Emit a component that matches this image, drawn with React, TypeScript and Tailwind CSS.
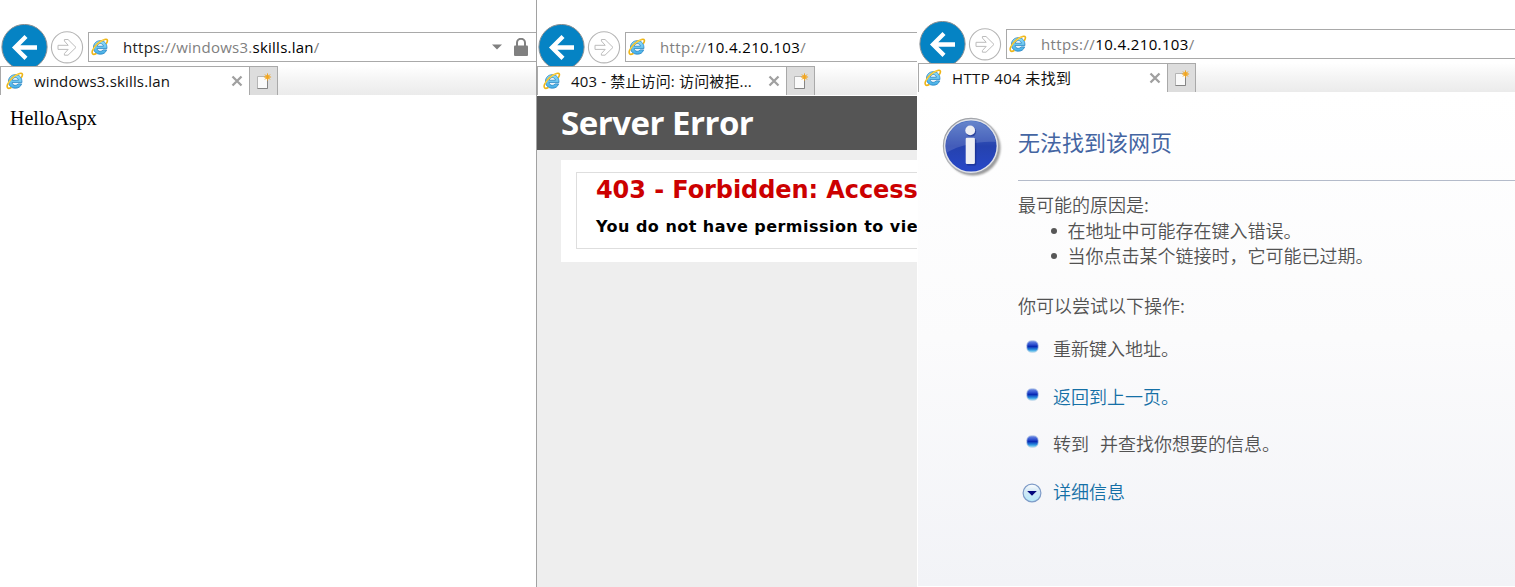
import type { ReactNode } from 'react';

const UI_FONT = "font-['Open_Sans','Noto_Sans_CJK_SC',sans-serif]";
const CJK_FONT = "font-['Noto_Sans_CJK_SC',sans-serif]";

function IeIcon() {
  return (
    <svg width="18" height="18" viewBox="0 0 18 18" className="shrink-0">
      <defs>
        <linearGradient id="ieBlue" x1="0" y1="0" x2="0" y2="1">
          <stop offset="0" stopColor="#8fdcf8" />
          <stop offset="1" stopColor="#45aee6" />
        </linearGradient>
      </defs>
      <path
        d="M15.9 10.6H6.1C6.3 12.4 7.5 13.3 9.3 13.3C10.6 13.3 11.6 12.8 12.1 11.9H15.6C14.7 14.7 12.4 16.2 9.3 16.2C5.2 16.2 2.5 13.5 2.5 9.5C2.5 5.5 5.2 2.7 9.3 2.7C13.6 2.7 16.2 5.7 15.9 10.6ZM6.2 8.2H12.4C12.2 6.6 11 5.6 9.3 5.6C7.6 5.6 6.5 6.6 6.2 8.2Z"
        fill="url(#ieBlue)"
        stroke="#2180c0"
        strokeWidth=".8"
      />
      <path
        d="M15.6 5.2C17.1 2.6 16.7 .7 13.7 1.5C9 2.7 3.5 7.7 1.6 12.2C.4 15.3 1.6 17.3 4.9 15.8"
        fill="none"
        stroke="#eeb516"
        strokeWidth="1.6"
        strokeLinecap="round"
      />
      <path d="M13.4 1.7C8.9 3.1 4 7.6 2 11.8" fill="none" stroke="#ffe164" strokeWidth=".8" />
    </svg>
  );
}

function BackButton() {
  return (
    <svg width="47" height="42" viewBox="0 0 47 42" className="block shrink-0">
      <circle cx="23.5" cy="23" r="22.6" fill="#0583c4" stroke="#8b8f92" strokeWidth="1" />
      <path d="M25 12.5L14 23.5L25 34.4M14.5 23.5H36" fill="none" stroke="#fff" strokeWidth="4.3" />
    </svg>
  );
}

function ForwardButton() {
  return (
    <svg width="34" height="34" viewBox="0 0 34 34" className="mb-[2px] block shrink-0">
      <circle cx="17" cy="17.3" r="15.6" fill="#fff" stroke="#b4b4b4" strokeWidth="1.1" />
      <path
        d="M8 15.3H18.2L14.4 11V9.5H18L26 17.4L18 25.2H14.4V23.6L18.2 19.4H8Z"
        fill="none"
        stroke="#bcbcbc"
        strokeWidth="1"
      />
    </svg>
  );
}

function NewTabIcon() {
  return (
    <svg width="16" height="18" viewBox="0 0 16 18">
      <path d="M1.5 4.5H11.5V16.5H1.5Z" fill="#fafafa" stroke="#b5b5b5" />
      <path d="M1.5 16.5H11.5V7" fill="none" stroke="#858585" />
      <circle cx="11.5" cy="5" r="2.3" fill="#ffc24a" />
      <path
        d="M11.5 1.4V8.6M7.9 5H15.1M9 2.5L14 7.5M14 2.5L9 7.5"
        stroke="#eda325"
        strokeWidth="1"
      />
    </svg>
  );
}

function CloseIcon() {
  return (
    <svg width="12" height="12" viewBox="0 0 12 12" className="shrink-0">
      <path d="M1.5 1.5L10.5 10.5M10.5 1.5L1.5 10.5" stroke="#a0a0a0" strokeWidth="2.3" />
    </svg>
  );
}

function LockIcon() {
  return (
    <svg width="14" height="18" viewBox="0 0 14 18">
      <path d="M3 8.5V4.8a4 4 0 0 1 8 0V8.5" fill="none" stroke="#808080" strokeWidth="2" />
      <rect x="0" y="7.4" width="14" height="10.6" rx="1" fill="#808080" />
    </svg>
  );
}

type ChromeProps = {
  url: ReactNode;
  title: string;
  titleClass: string;
  topClass: string;
  extras?: ReactNode;
};

function BrowserChrome({ url, title, titleClass, topClass, extras }: ChromeProps) {
  return (
    <header className={`shrink-0 ${UI_FONT}`}>
      <div className={`flex items-end ${topClass}`}>
        <div className="w-px shrink-0" />
        <BackButton />
        <div className="w-[2px] shrink-0" />
        <ForwardButton />
        <div className="mb-1 ml-1 flex h-[30px] min-w-0 flex-1 items-center border-y border-l border-[#a9a9a9] pl-[2px]">
          <IeIcon />
          <span className="ml-[14px] text-[15px] leading-[28px] whitespace-nowrap text-[#808080]">{url}</span>
          {extras}
        </div>
      </div>
      <div className="flex h-[29px] bg-linear-to-b from-white via-[#f4f4f4] to-[#ebebeb]">
        <div className="flex w-[249px] shrink-0 items-center border-t border-l border-[#a9a9a9] bg-white pl-[5px]">
          <IeIcon />
          <span className={`ml-[10px] flex-1 text-[15px] leading-[28px] whitespace-nowrap text-[#111] ${titleClass}`}>
            {title}
          </span>
          <div className="mr-[6px] flex">
            <CloseIcon />
          </div>
        </div>
        <div className="flex w-[29px] shrink-0 items-center justify-center border-x border-t border-[#a9a9a9] bg-[#dddddd]">
          <NewTabIcon />
        </div>
      </div>
    </header>
  );
}

function InfoIcon() {
  return (
    <svg width="62" height="62" viewBox="0 0 62 62" className="block shrink-0">
      <defs>
        <linearGradient id="infoFill" x1="0" y1="0" x2="0" y2="1">
          <stop offset="0" stopColor="#4d72c4" />
          <stop offset=".5" stopColor="#2542ae" />
          <stop offset="1" stopColor="#2747c8" />
        </linearGradient>
        <linearGradient id="infoRim" x1="0" y1="0" x2="1" y2="1">
          <stop offset="0" stopColor="#8f9298" />
          <stop offset=".5" stopColor="#b6b8bd" />
          <stop offset="1" stopColor="#909298" />
        </linearGradient>
        <filter id="infoShadow" x="-20%" y="-20%" width="150%" height="150%">
          <feGaussianBlur stdDeviation="1.3" />
        </filter>
      </defs>
      <circle cx="31" cy="31" r="27.5" fill="#000" opacity=".4" filter="url(#infoShadow)" />
      <circle cx="29" cy="29" r="27.6" fill="#e2e4e9" stroke="url(#infoRim)" strokeWidth="1.2" />
      <circle cx="29" cy="29" r="25.6" fill="url(#infoFill)" />
      <path d="M3.6 30A25.4 25.4 0 0 1 54 25C38 24 20 27 3.8 36Z" fill="#fff" opacity=".14" />
      <circle cx="29.1" cy="14.6" r="5" fill="#162c86" opacity=".6" />
      <rect x="24.7" y="22" width="9.6" height="26.4" rx="1.5" fill="#162c86" opacity=".6" />
      <circle cx="28.2" cy="13.4" r="4.9" fill="#eeeff4" />
      <rect x="23.7" y="20.8" width="9.2" height="26.2" rx="1.2" fill="#eeeff4" />
    </svg>
  );
}

function Bullet() {
  return (
    <svg width="13" height="13" viewBox="0 0 13 13">
      <defs>
        <linearGradient id="bulletFill" x1="0" y1="0" x2="0" y2="1">
          <stop offset="0" stopColor="#7391e6" />
          <stop offset=".3" stopColor="#3455d2" />
          <stop offset=".5" stopColor="#0829b4" />
          <stop offset=".75" stopColor="#2686dc" />
          <stop offset="1" stopColor="#8ae4f4" />
        </linearGradient>
      </defs>
      <rect x=".8" y=".8" width="11.4" height="11.4" rx="4.5" fill="url(#bulletFill)" stroke="#b9cbe6" strokeWidth=".8" />
    </svg>
  );
}

function ExpandIcon() {
  return (
    <svg width="20" height="20" viewBox="0 0 20 20">
      <defs>
        <linearGradient id="expandFill" x1="0" y1="0" x2="0" y2="1">
          <stop offset="0" stopColor="#fff" />
          <stop offset=".4" stopColor="#d3e8f5" />
          <stop offset="1" stopColor="#b6eafa" />
        </linearGradient>
      </defs>
      <circle cx="10" cy="10" r="8.9" fill="url(#expandFill)" stroke="#7f9cc8" strokeWidth="1.2" />
      <path d="M5.2 8H14.8L10 12.8Z" fill="#04087c" />
    </svg>
  );
}

function Action({ icon, children, rowClass }: { icon: ReactNode; children: ReactNode; rowClass: string }) {
  return (
    <li className={`flex h-6 ${rowClass}`}>
      <span className="flex w-[35px] shrink-0 justify-center pt-1 pr-[7px]">{icon}</span>
      <span className="leading-6 whitespace-pre">{children}</span>
    </li>
  );
}

export default function App() {
  return (
    <main className="flex h-[587px] w-[1515px] overflow-hidden bg-white">
      <section className="flex w-[537px] shrink-0 flex-col overflow-hidden border-r border-[#a2a2a2]">
        <BrowserChrome
          topClass="h-[66px]"
          url={
            <span className="tracking-[0.25px]">
              <span className="text-[#222]">https</span>://windows3.<span className="text-black">skills.lan</span>/
            </span>
          }
          title="windows3.skills.lan"
          titleClass="tracking-[0.17px]"
          extras={
            <div className="mr-2 ml-auto flex items-center gap-3">
              <svg width="10" height="6" viewBox="0 0 10 6">
                <path d="M0 .5H10L5 5.5Z" fill="#808080" />
              </svg>
              <LockIcon />
            </div>
          }
        />
        <p className="pt-[11px] pl-[10px] font-['Liberation_Serif',serif] text-[20px] leading-[24px] text-black">
          HelloAspx
        </p>
      </section>

      <section className="flex w-[380px] shrink-0 flex-col overflow-hidden">
        <BrowserChrome
          topClass="h-[66px]"
          url={
            <span className="tracking-[0.38px]">
              http://<span className="text-black">10.4.210.103</span>/
            </span>
          }
          title="403 - 禁止访问: 访问被拒..."
          titleClass="tracking-[0.15px]"
        />
        <div className="mt-px flex-1 bg-[#eeeeee]">
          <h1 className="h-[54px] bg-[#555555] pl-[24px] font-['Open_Sans',sans-serif] text-[33px] leading-[54px] font-bold tracking-[-0.5px] whitespace-nowrap text-white">
            Server Error
          </h1>
          <div className="mt-[10px] ml-6 h-[102px] bg-white pt-3 pl-[15px]">
            <div className="h-[77px] border-y border-l border-[#dedede] pl-[19px] font-['DejaVu_Sans',sans-serif] font-bold whitespace-nowrap">
              <h2 className="pt-px text-[24px] leading-[32px] tracking-[-0.08px] text-[#cc0000]">403 - Forbidden: Access</h2>
              <h3 className="mt-[9px] text-[16px] leading-[24px] tracking-[0.47px] text-black">
                You do not have permission to vie
              </h3>
            </div>
          </div>
        </div>
      </section>

      <section className="flex min-w-0 flex-1 flex-col overflow-hidden pl-px">
        <BrowserChrome
          topClass="h-[63px]"
          url={
            <span className="tracking-[0.38px]">
              https://<span className="text-black">10.4.210.103</span>/
            </span>
          }
          title="HTTP 404 未找到"
          titleClass="tracking-[0.35px]"
        />
        <div className="flex h-[494px] bg-linear-to-b from-white via-[#fbfbfc] to-[#f2f3f7] pt-[25px] pl-6">
          <InfoIcon />
          <div className={`ml-[14px] flex-1 text-[18px] font-[350] text-[#525252] ${CJK_FONT}`}>
            <h1 className="h-[64px] border-b border-[#b4bbca] pt-[7px] text-[22px] leading-[34px] font-normal text-[#4465a2]">
              无法找到该网页
            </h1>
            <p className="pt-[11px] leading-6">最可能的原因是:</p>
            <ul className="pt-[2px]">
              {['在地址中可能存在键入错误。', '当你点击某个链接时，它可能已过期。'].map((reason) => (
                <li key={reason} className="flex items-center pl-[33px] leading-[24.5px]">
                  <span className="mt-[2px] mr-[10.5px] size-[6px] rounded-full bg-[#575757]" />
                  {reason}
                </li>
              ))}
            </ul>
            <p className="pt-[26px] leading-6">你可以尝试以下操作:</p>
            <ul className="pt-[19px]">
              <Action icon={<Bullet />} rowClass="mb-6">
                重新键入地址。
              </Action>
              <Action icon={<Bullet />} rowClass="mb-[23px]">
                <a className="text-[#1570a6]">返回到上一页。</a>
              </Action>
              <Action icon={<Bullet />} rowClass="mb-6">
                转到<span className="inline-block w-[11px]" />并查找你想要的信息。
              </Action>
              <Action icon={<ExpandIcon />} rowClass="">
                <a className="text-[#1570a6]">详细信息</a>
              </Action>
            </ul>
          </div>
        </div>
      </section>
    </main>
  );
}
